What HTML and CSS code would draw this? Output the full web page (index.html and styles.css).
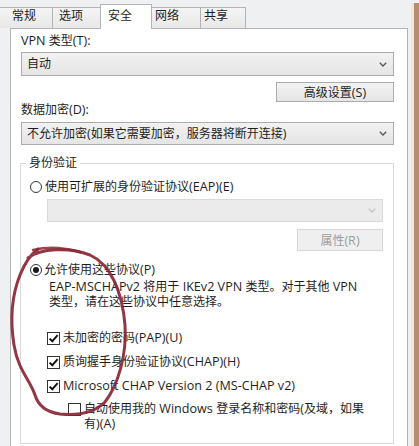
FILE: index.html
```html
<!DOCTYPE html>
<html lang="zh-CN">
<head>
<meta charset="utf-8">
<link rel="stylesheet" href="styles.css">
</head>
<body>
<div class="window">
  <div class="main">
    <div class="tabs">
      <div class="tab t1">常规</div>
      <div class="tab t2">选项</div>
      <div class="tab t3 active">安全</div>
      <div class="tab t4">网络</div>
      <div class="tab t5">共享</div>
    </div>
    <div class="panel">
      <div class="label l1"><span class="en">VPN </span>类型<span class="en">(T):</span></div>
      <div class="sel s1"><span>自动</span><svg class="chev" width="8" height="5" viewBox="0 0 8 5"><path d="M0.8 0.8 L4 4 L7.2 0.8" fill="none" stroke="#555" stroke-width="1.3"/></svg></div>
      <div class="btnrow"><div class="btn adv">高级设置<span class="en">(S)</span></div></div>
      <div class="label l2">数据加密<span class="en">(D):</span></div>
      <div class="sel s2"><span>不允许加密<span class="en">(</span>如果它需要加密，服务器将断开连接<span class="en">)</span></span><svg class="chev" width="8" height="5" viewBox="0 0 8 5"><path d="M0.8 0.8 L4 4 L7.2 0.8" fill="none" stroke="#555" stroke-width="1.3"/></svg></div>
      <fieldset class="group">
        <legend>身份验证</legend>
        <div class="row r1"><span class="radio"></span><span>使用可扩展的身份验证协议<span class="en">(EAP)(E)</span></span></div>
        <div class="sel dis"><span></span><svg class="chev" width="8" height="5" viewBox="0 0 8 5"><path d="M0.8 0.8 L4 4 L7.2 0.8" fill="none" stroke="#c4c4c4" stroke-width="1.3"/></svg></div>
        <div class="btnrow inner"><div class="btn prop">属性<span class="en">(R)</span></div></div>
        <div class="row r2"><span class="radio on"><span class="dot"></span></span><span>允许使用这些协议<span class="en">(P)</span></span></div>
        <div class="desc"><span class="en">EAP-MSCHAPv2 </span>将用于<span class="en"> IKEv2 VPN </span>类型。对于其他<span class="en"> VPN</span><br>类型，请在这些协议中任意选择。</div>
        <div class="row cb c1"><span class="box"><svg width="11" height="11" viewBox="0 0 11 11"><path d="M1.6 5.6 L4.3 8.3 L9.6 2.2" fill="none" stroke="#111" stroke-width="2"/></svg></span><span>未加密的密码<span class="en">(PAP)(U)</span></span></div>
        <div class="row cb c2"><span class="box"><svg width="11" height="11" viewBox="0 0 11 11"><path d="M1.6 5.6 L4.3 8.3 L9.6 2.2" fill="none" stroke="#111" stroke-width="2"/></svg></span><span>质询握手身份验证协议<span class="en">(CHAP)(H)</span></span></div>
        <div class="row cb c3"><span class="box"><svg width="11" height="11" viewBox="0 0 11 11"><path d="M1.6 5.6 L4.3 8.3 L9.6 2.2" fill="none" stroke="#111" stroke-width="2"/></svg></span><span class="en">Microsoft CHAP Version 2 (MS-CHAP v2)</span></div>
        <div class="row auto"><span class="box"></span><span class="autotext">自动使用我的<span class="en"> Windows </span>登录名称和密码<span class="en">(</span>及域，如果<br>有<span class="en">)(A)</span></span></div>
      </fieldset>
    </div>
  </div>
  <div class="edge"><div class="pink"></div><div class="tan"></div></div>
</div>
<svg class="scribble" width="419" height="446" viewBox="0 0 419 446">
  <path d="M28 258 C40 248 70 247 90 255 C110 264 122 290 125 325 C127 355 118 385 105 402 C95 412 80 416 60 414 C45 412 38 405 35 395 C30 380 18 370 14 345 C10 320 12 295 20 275 C24 265 30 255 38 249" fill="none" stroke="#8b2635" stroke-width="3" stroke-linecap="round" stroke-linejoin="round" opacity="0.92"/>
  <path d="M33 250 C50 246 68 248 80 252" fill="none" stroke="#8b2635" stroke-width="2.5" stroke-linecap="round" opacity="0.85"/>
</svg>
</body>
</html>
```

FILE: styles.css
```css
html, body {
  margin: 0;
  padding: 0;
}
body {
  width: 419px;
  height: 446px;
  overflow: hidden;
  position: relative;
  font-family: "Open Sans", "Noto Sans CJK SC", sans-serif;
  font-size: 12px;
  color: #1e1e1e;
  background: #eef0f2;
}
.en {
  font-size: 12.6px;
}
.window {
  display: flex;
  height: 446px;
}
.main {
  width: 411px;
  background: #eef0f2;
}
.edge {
  display: flex;
  padding-top: 3px;
  background: #eef0f2;
}
.pink {
  width: 3px;
  background: #f4e5db;
}
.tan {
  width: 5px;
  background: #b68d70;
}
.tabs {
  display: flex;
  align-items: flex-end;
  height: 28px;
}
.tab {
  box-sizing: border-box;
  height: 21px;
  border: 1px solid #b4b4b4;
  border-bottom: none;
  background: linear-gradient(#f4f4f4, #e8e8e8);
  line-height: 16px;
  white-space: nowrap;
}
.t1 { width: 53px; padding-left: 12px; border-left: none; }
.t2 { width: 49px; margin-left: -1px; padding-left: 6px; }
.t3 { width: 52px; margin-left: -1px; padding-left: 7px; }
.t4 { width: 50px; margin-left: -1px; padding-left: 3px; }
.t5 { width: 46px; margin-left: -1px; padding-left: 3px; }
.tab.active {
  height: 25px;
  padding-top: 3px;
  background: #ffffff;
  margin-bottom: -1px;
  position: relative;
  z-index: 2;
}
.panel {
  box-sizing: border-box;
  margin-left: 10px;
  width: 398px;
  height: 420px;
  border: 1px solid #b4b4b4;
  border-bottom: none;
  background: #ffffff;
  padding: 4px 13px 0 10px;
  position: relative;
  z-index: 1;
}
.label {
  line-height: 16px;
  height: 16px;
}
.sel {
  box-sizing: border-box;
  display: flex;
  align-items: center;
  justify-content: space-between;
  border: 1px solid #acacac;
  background: linear-gradient(#f2f2f2, #e5e5e5);
  padding: 0 6px 0 5px;
  line-height: 16px;
  white-space: nowrap;
}
.s1 { height: 24px; margin-top: 3px; }
.s2 { height: 23px; margin-top: 4px; }
.btnrow {
  display: flex;
  justify-content: flex-end;
}
.btn {
  box-sizing: border-box;
  display: flex;
  align-items: center;
  justify-content: center;
  border: 1px solid #acacac;
  background: linear-gradient(#f3f3f3, #e5e5e5);
  white-space: nowrap;
}
.adv {
  width: 118px;
  height: 20px;
  margin-top: 6px;
}
.group {
  margin: 10px 0 0 -1px;
  padding: 0 10px 10px 9px;
  border: 1px solid #dadada;
  height: 289px;
  box-sizing: border-box;
}
.group legend {
  padding: 0 3px;
  margin-left: -4px;
  line-height: 16px;
}
.row {
  display: flex;
  align-items: center;
  gap: 3px;
  height: 16px;
  line-height: 16px;
  white-space: nowrap;
}
.r1 { margin-top: 8px; }
.r2 { margin-top: 11px; gap: 2px; }
.radio {
  box-sizing: border-box;
  width: 12px;
  height: 12px;
  border: 1px solid #333333;
  border-radius: 50%;
  background: #ffffff;
  display: flex;
  align-items: center;
  justify-content: center;
}
.dot {
  width: 6px;
  height: 6px;
  border-radius: 50%;
  background: #1a1a1a;
}
.dis {
  height: 23px;
  margin: 4px 0 0 17px;
  border-color: #d9d9d9;
  background: #ebebeb;
}
.inner .prop {
  width: 86px;
  height: 22px;
  margin-top: 7px;
  border-color: #d6d6d6;
  background: #efefef;
  color: #9c9c9c;
}
.desc {
  margin: 1px 0 0 19px;
  line-height: 15px;
  white-space: nowrap;
}
.cb { margin-left: 17px; }
.c1 { margin-top: 21px; }
.c2, .c3 { margin-top: 8px; }
.box {
  box-sizing: border-box;
  width: 13px;
  height: 13px;
  border: 1px solid #333333;
  background: #ffffff;
  display: flex;
  align-items: center;
  justify-content: center;
  flex: none;
}
.auto {
  margin: 7px 0 0 38px;
  height: auto;
  align-items: flex-start;
}
.auto .box { margin-top: 2px; }
.autotext { line-height: 15px; }
.scribble {
  position: absolute;
  left: 0;
  top: 0;
  pointer-events: none;
  z-index: 5;
}
```
